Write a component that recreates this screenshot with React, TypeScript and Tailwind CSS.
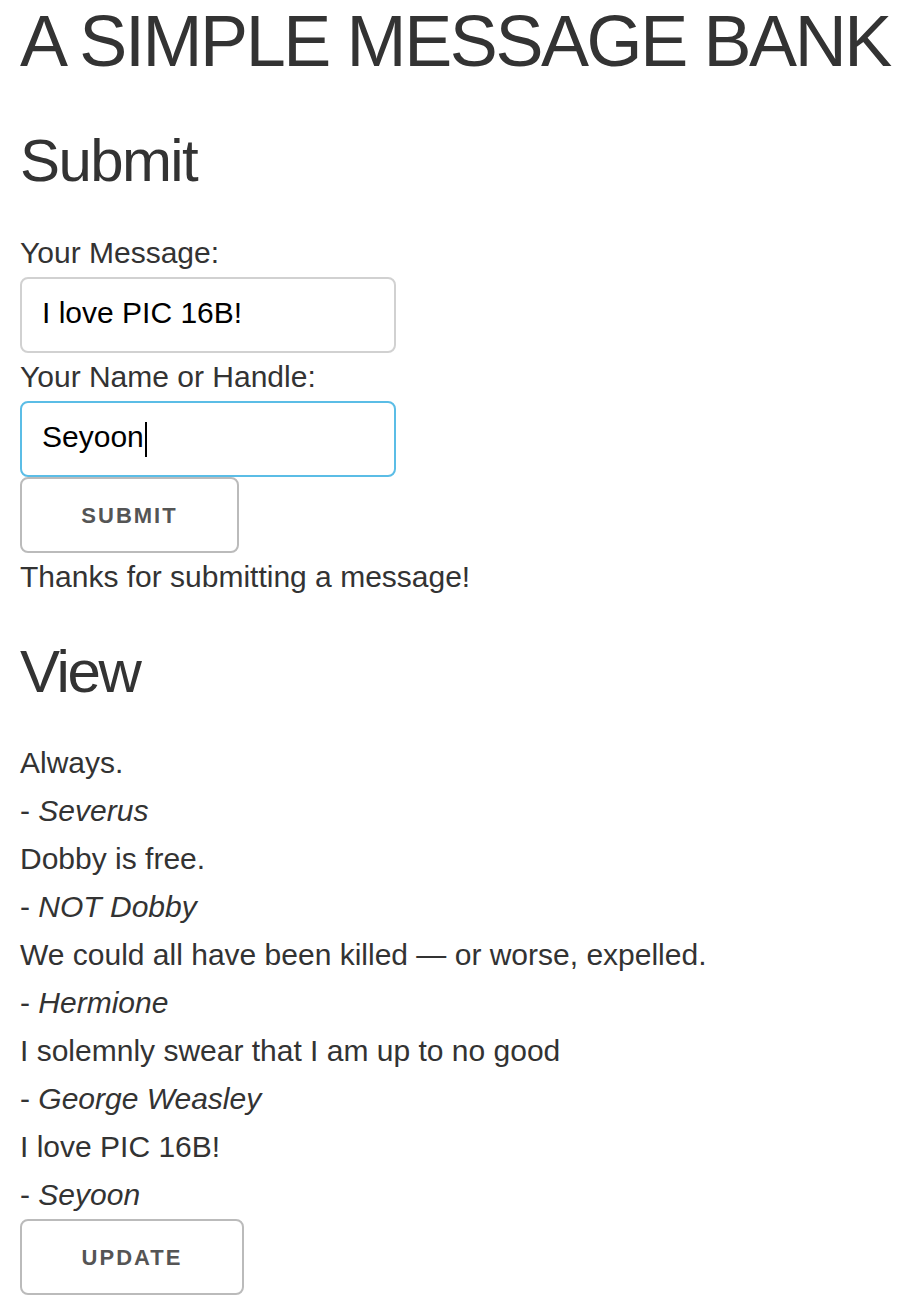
import React from "react";

const messages: { text: string; name: string }[] = [
  { text: "Always.", name: "Severus" },
  { text: "Dobby is free.", name: "NOT Dobby" },
  { text: "We could all have been killed \u2014 or worse, expelled.", name: "Hermione" },
  { text: "I solemnly swear that I am up to no good", name: "George Weasley" },
  { text: "I love PIC 16B!", name: "Seyoon" },
];

export default function App() {
  return (
    <div className="min-h-screen bg-white pl-5 text-[#333] font-['Liberation_Sans',Arial,sans-serif]">
      <h1 className="text-[72px] leading-[82px] tracking-[-2.4px] font-normal mb-[38px] whitespace-nowrap">
        A SIMPLE MESSAGE BANK
      </h1>

      <h2 className="text-[60px] leading-[81px] tracking-[-1.6px] font-normal mb-[28px]">Submit</h2>

      <div className="text-[30px] leading-[48px]">Your Message:</div>
      <div className="w-[376px] h-[76px] border-2 border-[#D1D1D1] rounded-[8px] px-5 pb-1 flex items-center text-[30px] leading-[48px] text-black">
        I love PIC 16B!
      </div>

      <div className="text-[30px] leading-[48px]">Your Name or Handle:</div>
      <div className="w-[376px] h-[76px] border-2 border-[#5BBDE6] rounded-[8px] px-5 pb-1 flex items-center text-[30px] leading-[48px] text-black">
        <span>Seyoon</span>
        <span className="inline-block w-[2px] h-[35px] bg-black ml-px mt-1" />
      </div>

      <button className="w-[219px] h-[76px] border-2 border-[#BBBBBB] rounded-[8px] flex items-center justify-center text-[22px] font-bold tracking-[2px] text-[#555] uppercase bg-transparent">
        Submit
      </button>

      <div className="text-[30px] leading-[48px] mb-[30px]">Thanks for submitting a message!</div>

      <h2 className="text-[60px] leading-[81px] tracking-[-2.4px] font-normal mb-[27px]">View</h2>

      <div className="text-[30px] leading-[48px]">
        {messages.map((m) => (
          <React.Fragment key={m.name}>
            <div>{m.text}</div>
            <div>
              - <em className="italic">{m.name}</em>
            </div>
          </React.Fragment>
        ))}
      </div>

      <button className="w-[224px] h-[76px] border-2 border-[#BBBBBB] rounded-[8px] flex items-center justify-center text-[22px] font-bold tracking-[2px] text-[#555] uppercase bg-transparent">
        Update
      </button>
    </div>
  );
}
